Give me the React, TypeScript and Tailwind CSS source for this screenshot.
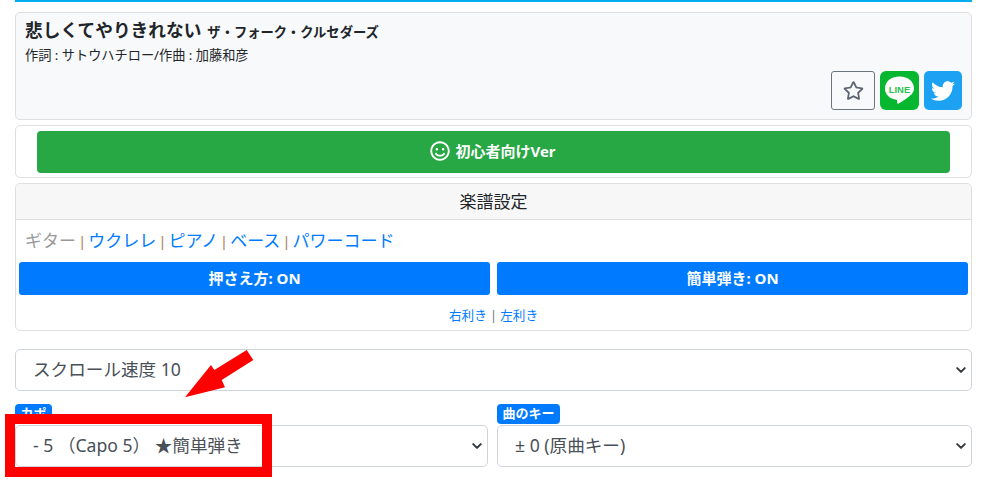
import React from "react";
import { FaTwitter, FaRegStar, FaRegSmile } from "react-icons/fa";

const font = "font-['Noto_Sans','Noto_Sans_CJK_JP',sans-serif]";

function Chevron() {
  return (
    <svg viewBox="0 0 16 16" className="pointer-events-none absolute right-[6px] top-1/2 h-[10px] w-[10px] -translate-y-1/2">
      <path d="M2 5l6 6 6-6" fill="none" stroke="#343a40" strokeWidth="3.2" strokeLinecap="round" strokeLinejoin="round" />
    </svg>
  );
}

function Select({ value, className = "" }: { value: string; className?: string }) {
  return (
    <div className={`relative ${className}`}>
      <select
        defaultValue={value}
        className={`block h-[42px] w-full appearance-none rounded-[5px] border border-[#ced4da] bg-white pb-[2px] pl-[17px] pr-8 text-[17.6px] leading-[26px] text-[#495057] ${font}`}
      >
        <option>{value}</option>
      </select>
      <Chevron />
    </div>
  );
}

function Sep() {
  return <span className="font-['Liberation_Sans',sans-serif] text-[15px] text-[#b08a6a]"> | </span>;
}

export default function App() {
  return (
    <div className={`relative h-[486px] w-[990px] overflow-hidden bg-white px-[15px] pr-[18px] ${font}`}>
      <div className="h-[2px] bg-[#00aeef]" />

      <div className="mt-[10px] flex h-[108px] flex-col rounded-[5px] border border-[#dfdfdf] bg-[#f8f9fb] pl-[9px] pr-[9px]">
        <div className="mt-[3px] flex items-baseline text-[#212529]">
          <span className="text-[17.7px] font-bold leading-[28px]">悲しくてやりきれない</span>
          <span className="ml-[6px] text-[13.3px] font-semibold">ザ・フォーク・クルセダーズ</span>
        </div>
        <div className="mt-[2px] text-[13.2px] leading-[18px] text-[#212529]">作詞 : サトウハチロー/作曲 : 加藤和彦</div>
        <div className="mt-[7px] flex justify-end gap-[5px]">
          <div className="flex h-[39px] w-[44px] items-center justify-center rounded-[3px] border border-[#6c757d]">
            <FaRegStar className="h-[21px] w-[21px] text-[#5b6570]" />
          </div>
          <div className="flex h-[39px] w-[39px] items-center justify-center rounded-[6px] bg-[#06b72f]">
            <svg viewBox="0 0 39 39" className="h-[39px] w-[39px]">
              <path
                d="M19.5 5.5C10.5 5.5 5 11 5 17.5c0 6 4.700 10.500 11.500 11.300.900.100.800 1 .500 2.700-.200 1.200.600 1.500 1.700.900 3-1.700 7.300-4.200 10.300-6.800 3.300-2.700 5-5 5-8.100C34 11 28.500 5.500 19.500 5.500z"
                fill="#fff"
              />
              <text x="19.500" y="21.500" textAnchor="middle" fontSize="9.500" fontWeight="700" fill="#2cc24f" fontFamily="Liberation Sans, sans-serif">
                LINE
              </text>
            </svg>
          </div>
          <div className="flex h-[39px] w-[38px] items-center justify-center rounded-[5px] bg-[#1da1f2]">
            <FaTwitter className="h-[24px] w-[24px] text-white" />
          </div>
        </div>
      </div>

      <div className="mt-[5px] h-[53px] rounded-[5px] border border-[#dfdfdf] px-[21px] py-[5px]">
        <div className="flex h-[42px] items-center justify-center rounded-[4px] bg-[#28a745] pr-[1px] text-[15px] font-bold text-white">
          <FaRegSmile className="mr-[5px] h-[20px] w-[20px] -translate-y-[1px]" />
          <span className="-translate-y-[1px]">初心者向けVer</span>
        </div>
      </div>

      <div className="mt-[5px] h-[148px] rounded-[5px] border border-[#dfdfdf]">
        <div className="h-[36px] rounded-t-[5px] border-b border-[#dfdfdf] bg-[#f7f7f7] text-center text-[17px] leading-[35px] text-[#212529]">
          楽譜設定
        </div>
        <div className="mt-[7px] h-[27px] pl-[9px] text-[17px] leading-[27px] text-[#007bff]">
          <span className="text-[#999]">ギター</span>
          <Sep />ウクレレ<Sep />ピアノ<Sep />ベース<Sep />パワーコード
        </div>
        <div className="mt-[8px] flex gap-[7px] px-[3px]">
          <div className="flex h-[33px] flex-1 items-center justify-center rounded-[3px] bg-[#007bff] text-[15px] font-bold text-white">押さえ方: ON</div>
          <div className="flex h-[33px] flex-1 items-center justify-center rounded-[3px] bg-[#007bff] text-[15px] font-bold text-white">簡単弾き: ON</div>
        </div>
        <div className="mt-[12px] text-center text-[12.6px] leading-[18px] text-[#007bff]">
          右利き <span className="text-[#6c757d]">|</span> 左利き
        </div>
      </div>

      <Select value="スクロール速度 10" className="mt-[18px]" />

      <div className="mt-[13px] flex gap-[9px]">
        <div className="w-[473px]">
          <div className="flex h-[20px] w-[37px] items-center justify-center rounded-[4px] bg-[#007bff] text-[13px] font-bold text-white">カポ</div>
          <Select value="- 5 （Capo 5） ★簡単弾き" className="mt-px" />
        </div>
        <div className="flex-1">
          <div className="flex h-[20px] w-[63px] items-center justify-center rounded-[4px] bg-[#007bff] text-[13px] font-bold text-white">曲のキー</div>
          <Select value="± 0 (原曲キー)" className="mt-px" />
        </div>
      </div>

      <div className="absolute left-[5px] top-[414px] h-[63px] w-[267px] border-[10px] border-[#ff0000]" />
      <svg className="absolute left-[180px] top-[345px] h-[60px] w-[80px]" viewBox="0 0 80 60">
        <polygon points="5,52.300 31,20 34.300,25 66.700,5 73.300,15 41.700,35 45,42.300" fill="#ff0000" />
      </svg>
    </div>
  );
}
